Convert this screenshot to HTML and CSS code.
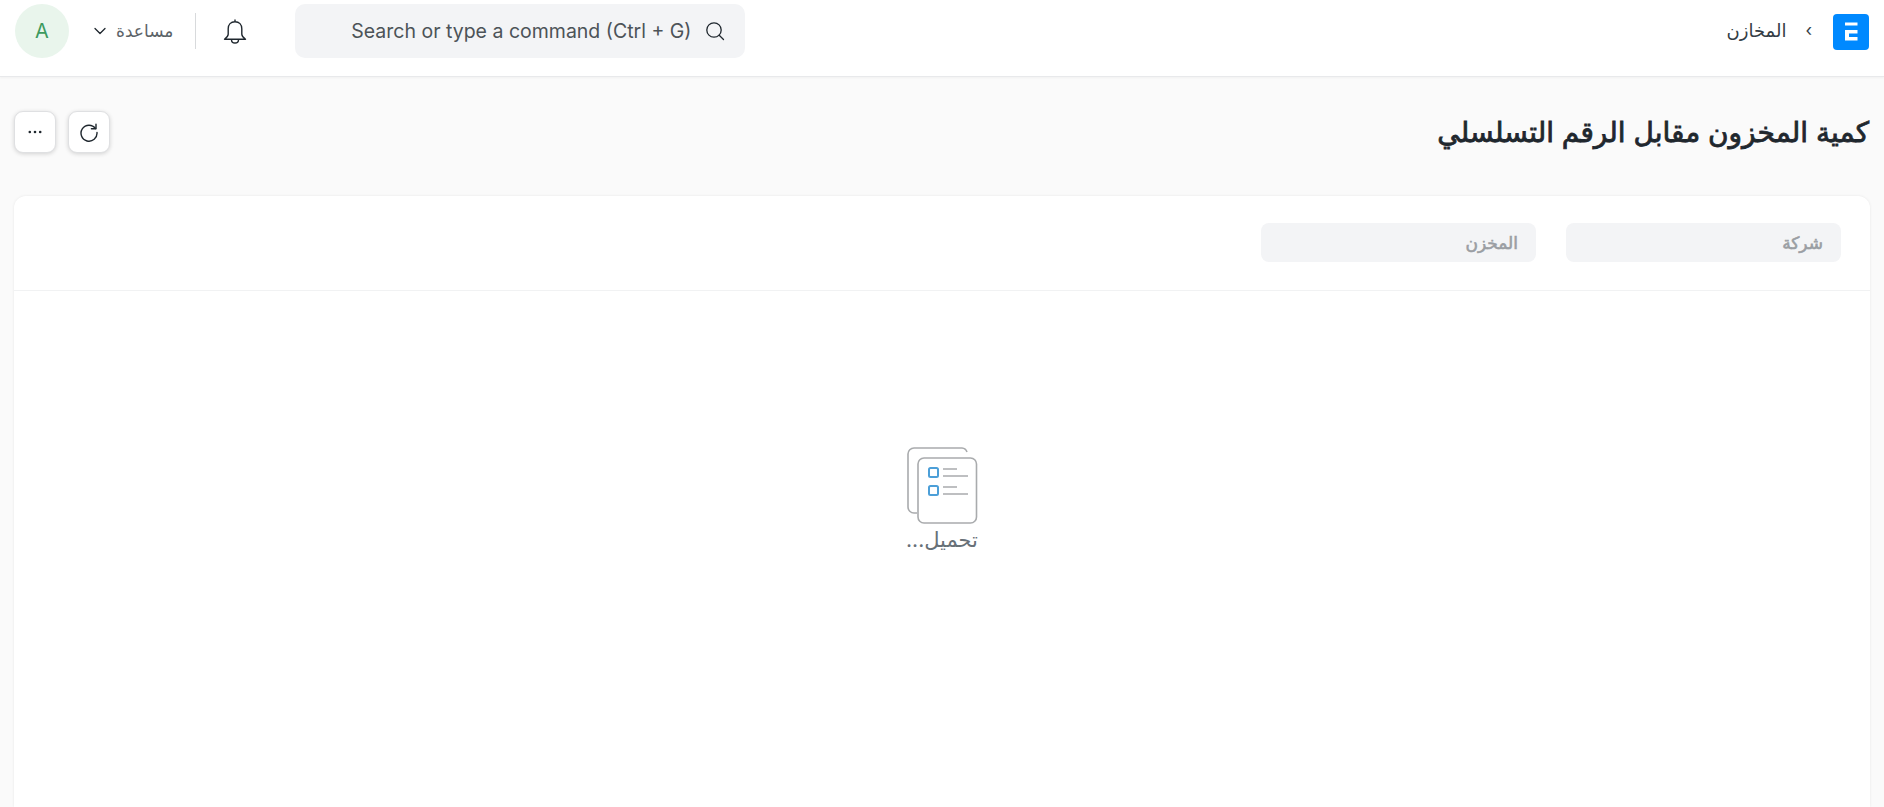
FILE: index.html
```html
<!DOCTYPE html>
<html lang="ar" dir="rtl">
<head>
<meta charset="utf-8">
<title>كمية المخزون مقابل الرقم التسلسلي</title>
<link rel="stylesheet" href="styles.css">
</head>
<body>
<header class="navbar">
  <div class="logo">
    <svg width="36" height="36" viewBox="0 0 36 36"><rect width="36" height="36" rx="4" fill="#0089ff"/><path d="M12 8.500h12.500v3H12zM12 16h12.500v3.500H16v3.500h8.500v3.500H12z" fill="#fff"/></svg>
  </div>
  <nav class="crumbs"><span class="crumb-sep">›</span><a class="crumb">المخازن</a></nav>
  <div class="nav-tools">
    <div class="search">
      <svg class="search-icon" width="20" height="20" viewBox="0 0 20 20" fill="none" stroke="#1f272e" stroke-width="1.300"><circle cx="9" cy="9" r="7.200"/><path d="M14.200 14.200l4.300 4.300" stroke-linecap="round"/></svg>
      <span class="search-text" dir="ltr">Search or type a command (Ctrl + G)</span>
    </div>
    <svg class="bell" width="24" height="27" viewBox="0 0 24 27" fill="none" stroke="#1f272e" stroke-width="1.400" stroke-linejoin="round"><path d="M12 1.500v2.200M12 3.700c-4.200 0-6.800 3-6.800 7v5.500c0 2-1.400 3.300-3.700 5h21c-2.300-1.700-3.700-3-3.700-5v-5.500c0-4-2.600-7-6.800-7z"/><path d="M8.500 21.700c0 2 1.500 3.300 3.500 3.300s3.500-1.300 3.500-3.300"/></svg>
    <div class="divider"></div>
    <div class="help">
      <span class="help-text">مساعدة</span>
      <svg width="14" height="14" viewBox="0 0 14 14" fill="none" stroke="#1f272e" stroke-width="1.300" stroke-linecap="round" stroke-linejoin="round"><path d="M2 4.500l5 5 5-5"/></svg>
    </div>
    <div class="avatar">A</div>
  </div>
</header>
<main class="page">
  <div class="page-head">
    <h1 class="title">كمية المخزون مقابل الرقم التسلسلي</h1>
    <div class="actions">
      <button class="btn" type="button"><svg width="20" height="20" viewBox="0 0 20 20" fill="none" stroke="#1f272e" stroke-width="1.400" stroke-linecap="round" stroke-linejoin="round"><path d="M16.500 6.500A8 8 0 1 0 18 10.500"/><path d="M17 2.200v4.600h-4.600"/></svg></button>
      <button class="btn" type="button"><svg width="16" height="16" viewBox="0 0 16 16" fill="#1f272e"><circle cx="2.800" cy="8" r="1.300"/><circle cx="8" cy="8" r="1.300"/><circle cx="13.200" cy="8" r="1.300"/></svg></button>
    </div>
  </div>
  <section class="card">
    <div class="filters">
      <div class="filter">شركة</div>
      <div class="filter">المخزن</div>
    </div>
    <div class="loading">
      <svg width="72" height="78" viewBox="0 0 72 78" fill="none">
        <path d="M11 66H8a6 6 0 0 1-6-6V7a6 6 0 0 1 6-6h48a6 6 0 0 1 5 4" stroke="#a9abad" stroke-width="1.600"/>
        <rect x="12" y="11" width="58.500" height="65" rx="6" fill="#fff" stroke="#a9abad" stroke-width="1.600"/>
        <rect x="23" y="21" width="9" height="9" rx="1.500" stroke="#4c9fd8" stroke-width="2"/>
        <rect x="23" y="39" width="9" height="9" rx="1.500" stroke="#4c9fd8" stroke-width="2"/>
        <path d="M37 22h14M37 29h25M37 40h14M37 47h25" stroke="#a9abad" stroke-width="1.500"/>
      </svg>
      <div class="loading-text">تحميل...</div>
    </div>
  </section>
</main>
</body>
</html>
```
FILE: styles.css
```css
* { box-sizing: border-box; }
html, body { margin: 0; height: 100%; overflow: hidden; }
body { background: #fafafa; font-family: "Inter", "DejaVu Sans", sans-serif; color: #1f272e; display: flex; flex-direction: column; }
.navbar { height: 77px; flex: none; background: #fff; border-bottom: 1px solid #e8e9eb; box-shadow: 0 1px 2px rgba(0,0,0,.04); display: flex; align-items: flex-start; padding: 4px 15px 0; }
.logo { margin-top: 10px; height: 36px; }
.crumbs { display: flex; align-items: center; height: 52px; margin-right: 21px; font-size: 18px; color: #333c44; gap: 19px; }
.crumb-sep { font-size: 17px; }
.nav-tools { margin-right: auto; display: flex; align-items: center; height: 54px; }
.search { width: 450px; height: 54px; background: #f3f4f6; border-radius: 10px; display: flex; align-items: center; padding-right: 20px; gap: 14px; }
.search-text { font-size: 19.500px; color: #4c5358; }
.bell { margin-right: 48px; }
.divider { width: 1px; height: 36px; background: #d8dadc; margin-right: 27px; }
.help { display: flex; align-items: center; gap: 9px; margin-right: 22px; font-size: 17px; color: #5c6368; }
.avatar { width: 54px; height: 54px; border-radius: 50%; background: #e9f5ec; color: #3d9a5f; display: flex; align-items: center; justify-content: center; font-size: 20px; margin-right: 24px; }
.page { flex: 1; display: flex; flex-direction: column; padding: 0 14px; min-height: 0; }
.page-head { display: flex; align-items: center; justify-content: space-between; height: 119px; padding-bottom: 9px; flex: none; }
.title { margin: 0 1px 0 0; font-size: 28px; font-weight: 400; -webkit-text-stroke: .8px #1f272e; color: #1f272e; }
.actions { display: flex; gap: 12px; }
.btn { width: 42px; height: 42px; padding: 0; border: 1px solid #dfe0e2; border-radius: 9px; background: #fff; box-shadow: 0 1px 4px rgba(0,0,0,.16); display: flex; align-items: center; justify-content: center; }
.card { flex: 1; background: #fff; border-radius: 12px 12px 0 0; box-shadow: 0 0 3px rgba(0,0,0,.08); display: flex; flex-direction: column; }
.filters { height: 95px; flex: none; border-bottom: 1px solid #f1f2f3; padding: 27px 29px 0; display: flex; gap: 30px; }
.filter { width: 275px; height: 39px; border-radius: 8px; background: #f3f4f6; color: #9a9ea3; font-size: 17px; -webkit-text-stroke: .6px #9a9ea3; padding: 0 18px; display: flex; align-items: center; }
.loading { display: flex; flex-direction: column; align-items: center; padding-top: 156px; }
.loading-text { font-size: 21px; color: #687178; margin-top: 2px; }
```
